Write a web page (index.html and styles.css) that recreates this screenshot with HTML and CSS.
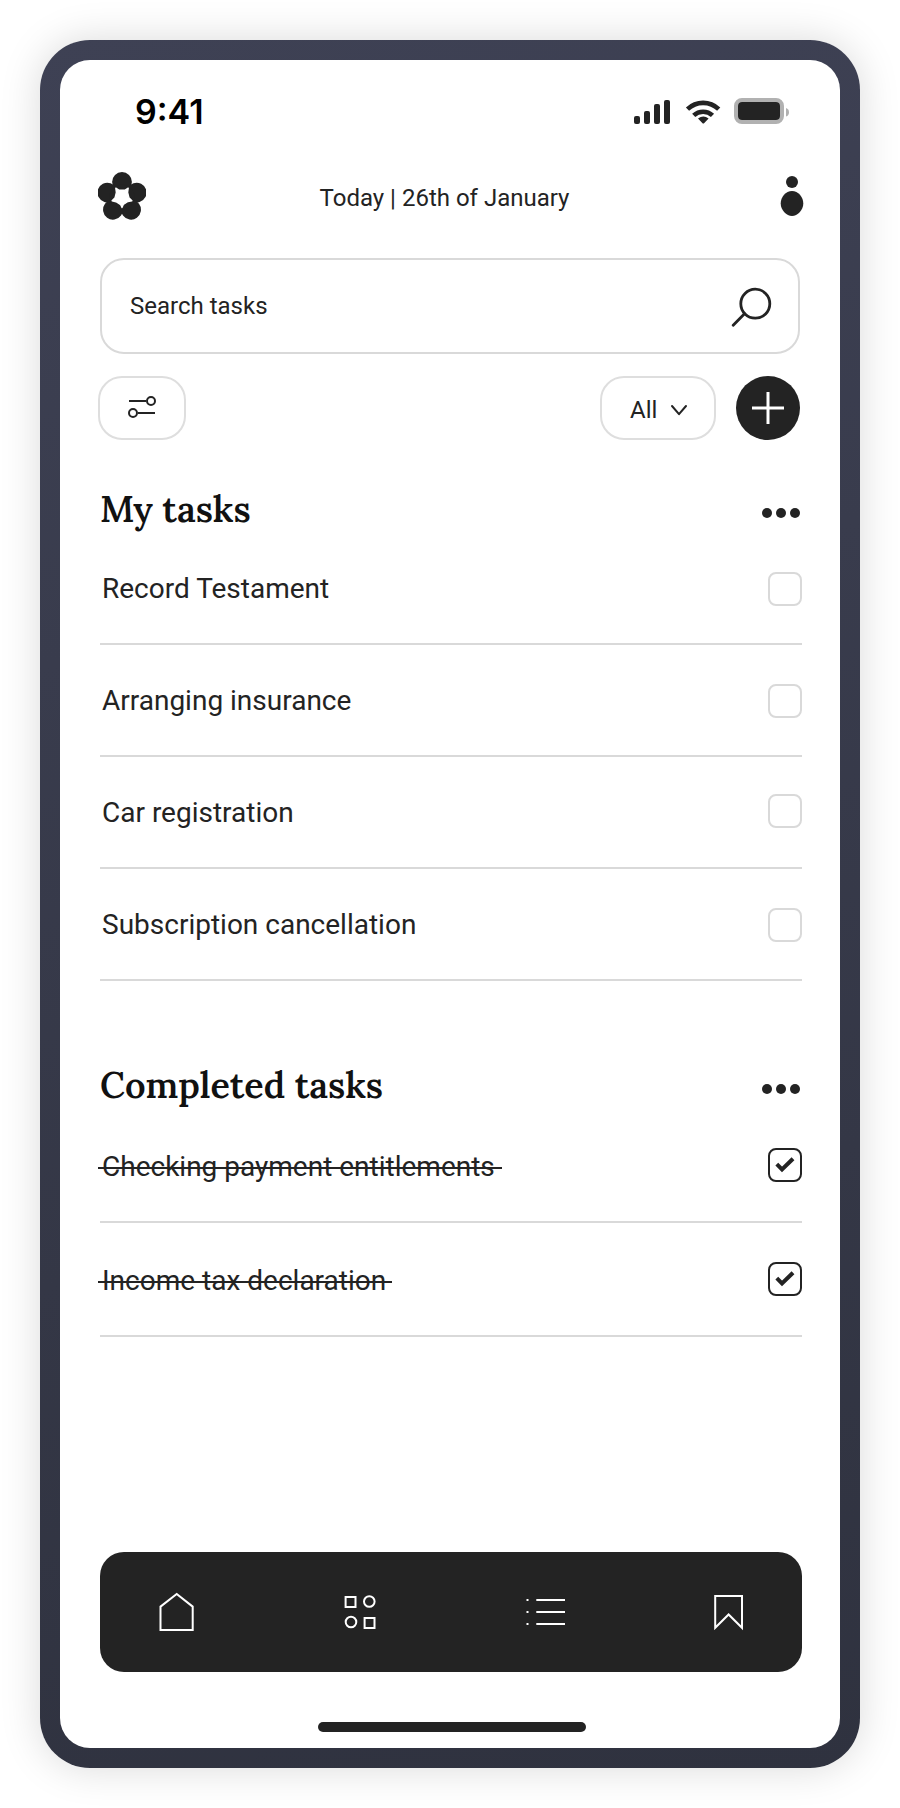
FILE: index.html
```html
<!DOCTYPE html>
<html lang="en">
<head>
<meta charset="utf-8">
<title>My tasks</title>
<link rel="stylesheet" href="styles.css">
</head>
<body>
<div class="phone">
  <div class="screen">
    <div class="status">
      <span class="time">9:41</span>
      <svg class="status-icons" width="158" height="28" viewBox="0 0 158 28">
        <g fill="#232323">
          <rect x="0" y="18" width="6" height="8" rx="2"/>
          <rect x="10" y="13" width="6" height="13" rx="2"/>
          <rect x="20" y="6" width="6" height="20" rx="2"/>
          <rect x="30" y="2" width="6" height="24" rx="2"/>
          <path d="M64 20.500 68.300 25q1 1 2 0l4.300-4.500q-5.200-4-10.600 0Z"/>
        </g>
        <g fill="none" stroke="#232323" stroke-width="4.600">
          <path d="M53.500 11.200a22.500 22.500 0 0 1 31.200 0"/>
          <path d="M59.700 17.400a13.800 13.800 0 0 1 18.800 0"/>
        </g>
        <rect x="102" y="2" width="46" height="22" rx="6" fill="none" stroke="#b1b1b1" stroke-width="4"/>
        <rect x="104" y="4" width="42" height="18" rx="4" fill="#232323"/>
        <path d="M152 10q3 1 3 4.300t-3 4.300Z" fill="#b1b1b1"/>
      </svg>
    </div>

    <header class="header">
      <svg class="flower" width="48" height="48" viewBox="0 0 48 48">
        <defs><ellipse id="petal" cx="24" cy="10" rx="9.900" ry="10"/></defs>
        <g fill="#232323">
          <use href="#petal"/>
          <use href="#petal" transform="rotate(72 24 25.300)"/>
          <use href="#petal" transform="rotate(144 24 25.300)"/>
          <use href="#petal" transform="rotate(216 24 25.300)"/>
          <use href="#petal" transform="rotate(288 24 25.300)"/>
          <circle cx="24" cy="25.300" r="12.500"/>
        </g>
        <path d="M17.800 16.200 20.800 18.200h6.400l3-2-.6 4.200 1.300 5.300 3 3-4 .8-4.600 3L24 35.500l-1.300-2.800-4.600-3-4-1 3-3 1.300-5.300Z" fill="#fff" stroke="#fff" stroke-width="1.400" stroke-linejoin="round"/>
      </svg>
      <span class="date">Today | 26th of January</span>
      <svg class="person" width="24" height="42" viewBox="0 0 24 42" fill="#232323">
        <circle cx="12" cy="7" r="6"/>
        <path d="M12 16c6.200 0 11.300 6 11.300 12.500S17.500 41 12 41 .7 35 .7 28.500 5.800 16 12 16Z"/>
      </svg>
    </header>

    <div class="search">
      <span>Search tasks</span>
      <svg width="42" height="42" viewBox="0 0 42 42" fill="none" stroke="#232323" stroke-width="2.800">
        <circle cx="25.300" cy="18.700" r="14.500"/>
        <path d="M14.500 28.800 3.200 40.200" stroke-linecap="round"/>
      </svg>
    </div>

    <div class="tools">
      <div class="pill filter">
        <svg width="30" height="24" viewBox="0 0 30 24" fill="none" stroke="#232323" stroke-width="2">
          <path d="M2 7h17M11 19h17"/><circle cx="24" cy="7" r="4"/><circle cx="6" cy="19" r="4"/>
        </svg>
      </div>
      <div class="pill select">
        <span>All</span>
        <svg width="18" height="12" viewBox="0 0 18 12" fill="none" stroke="#232323" stroke-width="2" stroke-linecap="round" stroke-linejoin="round"><path d="M2 2l7 8.200L16 2"/></svg>
      </div>
      <div class="add">
        <svg width="32" height="32" viewBox="0 0 32 32" stroke="#fff" stroke-width="3"><path d="M16 0v32M0 16h32"/></svg>
      </div>
    </div>

    <section class="tasks">
      <div class="heading">
        <h2>My tasks</h2>
        <svg class="more" width="38" height="10" viewBox="0 0 38 10" fill="#232323"><circle cx="5" cy="5" r="5"/><circle cx="19" cy="5" r="5"/><circle cx="33" cy="5" r="5"/></svg>
      </div>
      <div class="row first"><span>Record Testament</span><i class="box"></i></div>
      <div class="row"><span>Arranging insurance</span><i class="box"></i></div>
      <div class="row"><span>Car registration</span><i class="box raised"></i></div>
      <div class="row"><span>Subscription cancellation</span><i class="box"></i></div>
    </section>

    <section class="tasks completed">
      <div class="heading">
        <h2>Completed tasks</h2>
        <svg class="more" width="38" height="10" viewBox="0 0 38 10" fill="#232323"><circle cx="5" cy="5" r="5"/><circle cx="19" cy="5" r="5"/><circle cx="33" cy="5" r="5"/></svg>
      </div>
      <div class="row first"><span class="done long">Checking payment entitlements</span>
        <i class="box checked"><svg width="20" height="16" viewBox="0 0 20 16" fill="none" stroke="#232323" stroke-width="4"><path d="M1.800 7.200 7 12.500 18 1.700"/></svg></i></div>
      <div class="row"><span class="done">Income tax declaration</span>
        <i class="box checked"><svg width="20" height="16" viewBox="0 0 20 16" fill="none" stroke="#232323" stroke-width="4"><path d="M1.800 7.200 7 12.500 18 1.700"/></svg></i></div>
    </section>

    <nav class="nav">
      <svg width="36" height="40" viewBox="0 0 36 40"><path d="M1.500 14.600 17.700 2l16 12.600V38H1.500Z"/></svg>
      <svg width="32" height="36" viewBox="0 0 32 36"><path d="M1.600 3h9.900v9.900H1.600ZM20.600 24h9.900v9.900h-9.900Z"/><circle cx="25.300" cy="7.500" r="5.300"/><circle cx="7" cy="28" r="5.300"/></svg>
      <svg width="40" height="28" viewBox="-1 0 40 28"><path d="M10.300 2H39M10.300 14H39M10.300 26H39M.5 2h2M.5 14h2M.5 26h2"/></svg>
      <svg width="30" height="38" viewBox="0 0 30 38"><path d="M1.200 3h26.800v31.800L14.600 21.500 1.200 34.800Z"/></svg>
    </nav>
    <div class="home-bar"></div>
  </div>
</div>
</body>
</html>
```

FILE: styles.css
```css
* { box-sizing: border-box; }

body {
  margin: 0;
  padding: 40px;
  background: #fff;
  color: #232323;
  font-family: Roboto, sans-serif;
}

svg { display: block; flex: none; }

.phone {
  width: 820px;
  height: 1728px;
  padding: 20px;
  border-radius: 50px;
  background: linear-gradient(170deg, #3e4154, #2f323f);
  box-shadow: 0 0 40px rgba(0, 0, 0, 0.15);
}

.screen {
  display: flex;
  flex-direction: column;
  height: 1688px;
  padding: 0 38px 16px 40px;
  border-radius: 30px;
  background: #fff;
}

.status {
  display: flex;
  justify-content: space-between;
  height: 112px;
  padding: 38px 10px 0 35px;
}

.time {
  margin-top: -6px;
  color: #000;
  font: 600 34px/40px Inter, sans-serif;
}

.header {
  display: flex;
  justify-content: space-between;
  height: 86px;
  margin: 0 -2px;
}

.date {
  margin: 12px 0 0 -37px;
  font-size: 24px;
  line-height: 28px;
}

.person { margin-top: 3px; }

.search {
  display: flex;
  align-items: center;
  justify-content: space-between;
  width: 700px;
  height: 96px;
  padding: 0 26px 0 28px;
  border: 2px solid #d9d9d9;
  border-radius: 24px;
  font-size: 24px;
}

.tools {
  display: flex;
  height: 64px;
  margin: 22px 2px 0 -2px;
}

.pill {
  display: flex;
  align-items: center;
  border: 2px solid #dedede;
  border-radius: 24px;
  font-size: 24px;
}

.filter {
  width: 88px;
  padding: 0 0 4px 27px;
}

.select {
  gap: 13px;
  width: 116px;
  margin-left: auto;
  padding: 3px 0 0 28px;
}

.add {
  display: flex;
  align-items: center;
  justify-content: center;
  width: 64px;
  margin-left: 20px;
  border-radius: 50%;
  background: #232323;
}

.tasks { margin-top: 46px; }

.heading {
  display: flex;
  justify-content: space-between;
  height: 48px;
}

h2 {
  margin: 0;
  color: #111;
  font: 600 36px/46px Lora, "Liberation Serif", serif;
}

.more { margin: 22px 2px 0 0; }

.row {
  display: flex;
  align-items: flex-start;
  justify-content: space-between;
  height: 112px;
  padding: 39px 0 0 2px;
  border-bottom: 2px solid #d9d9d9;
  font-size: 28px;
  line-height: 34px;
}

.row.first {
  height: 111px;
  padding-top: 38px;
}

.box {
  display: flex;
  align-items: center;
  justify-content: center;
  width: 34px;
  height: 34px;
  border: 2px solid #d9d9d9;
  border-radius: 8px;
}

.raised { margin-top: -2px; }

.checked { border-color: #232323; }

.completed { margin-top: 81px; }

.completed .row { height: 114px; }
.completed .row.first { height: 113px; }

.done {
  margin: 2px 0 0 -4px;
  padding: 0 6px 0 4px;
  background: linear-gradient(#232323, #232323) 0 17px / 100% 2px no-repeat;
}

.long { padding-right: 7px; }

.nav {
  display: flex;
  justify-content: space-between;
  align-items: center;
  height: 120px;
  margin-top: auto;
  padding: 0 58px 0 59px;
  border-radius: 24px;
  background: #232323;
  fill: none;
  stroke: #fff;
  stroke-width: 2;
}

.home-bar {
  width: 268px;
  height: 10px;
  margin: 50px 0 0 218px;
  border-radius: 5px;
  background: #232323;
}
```
